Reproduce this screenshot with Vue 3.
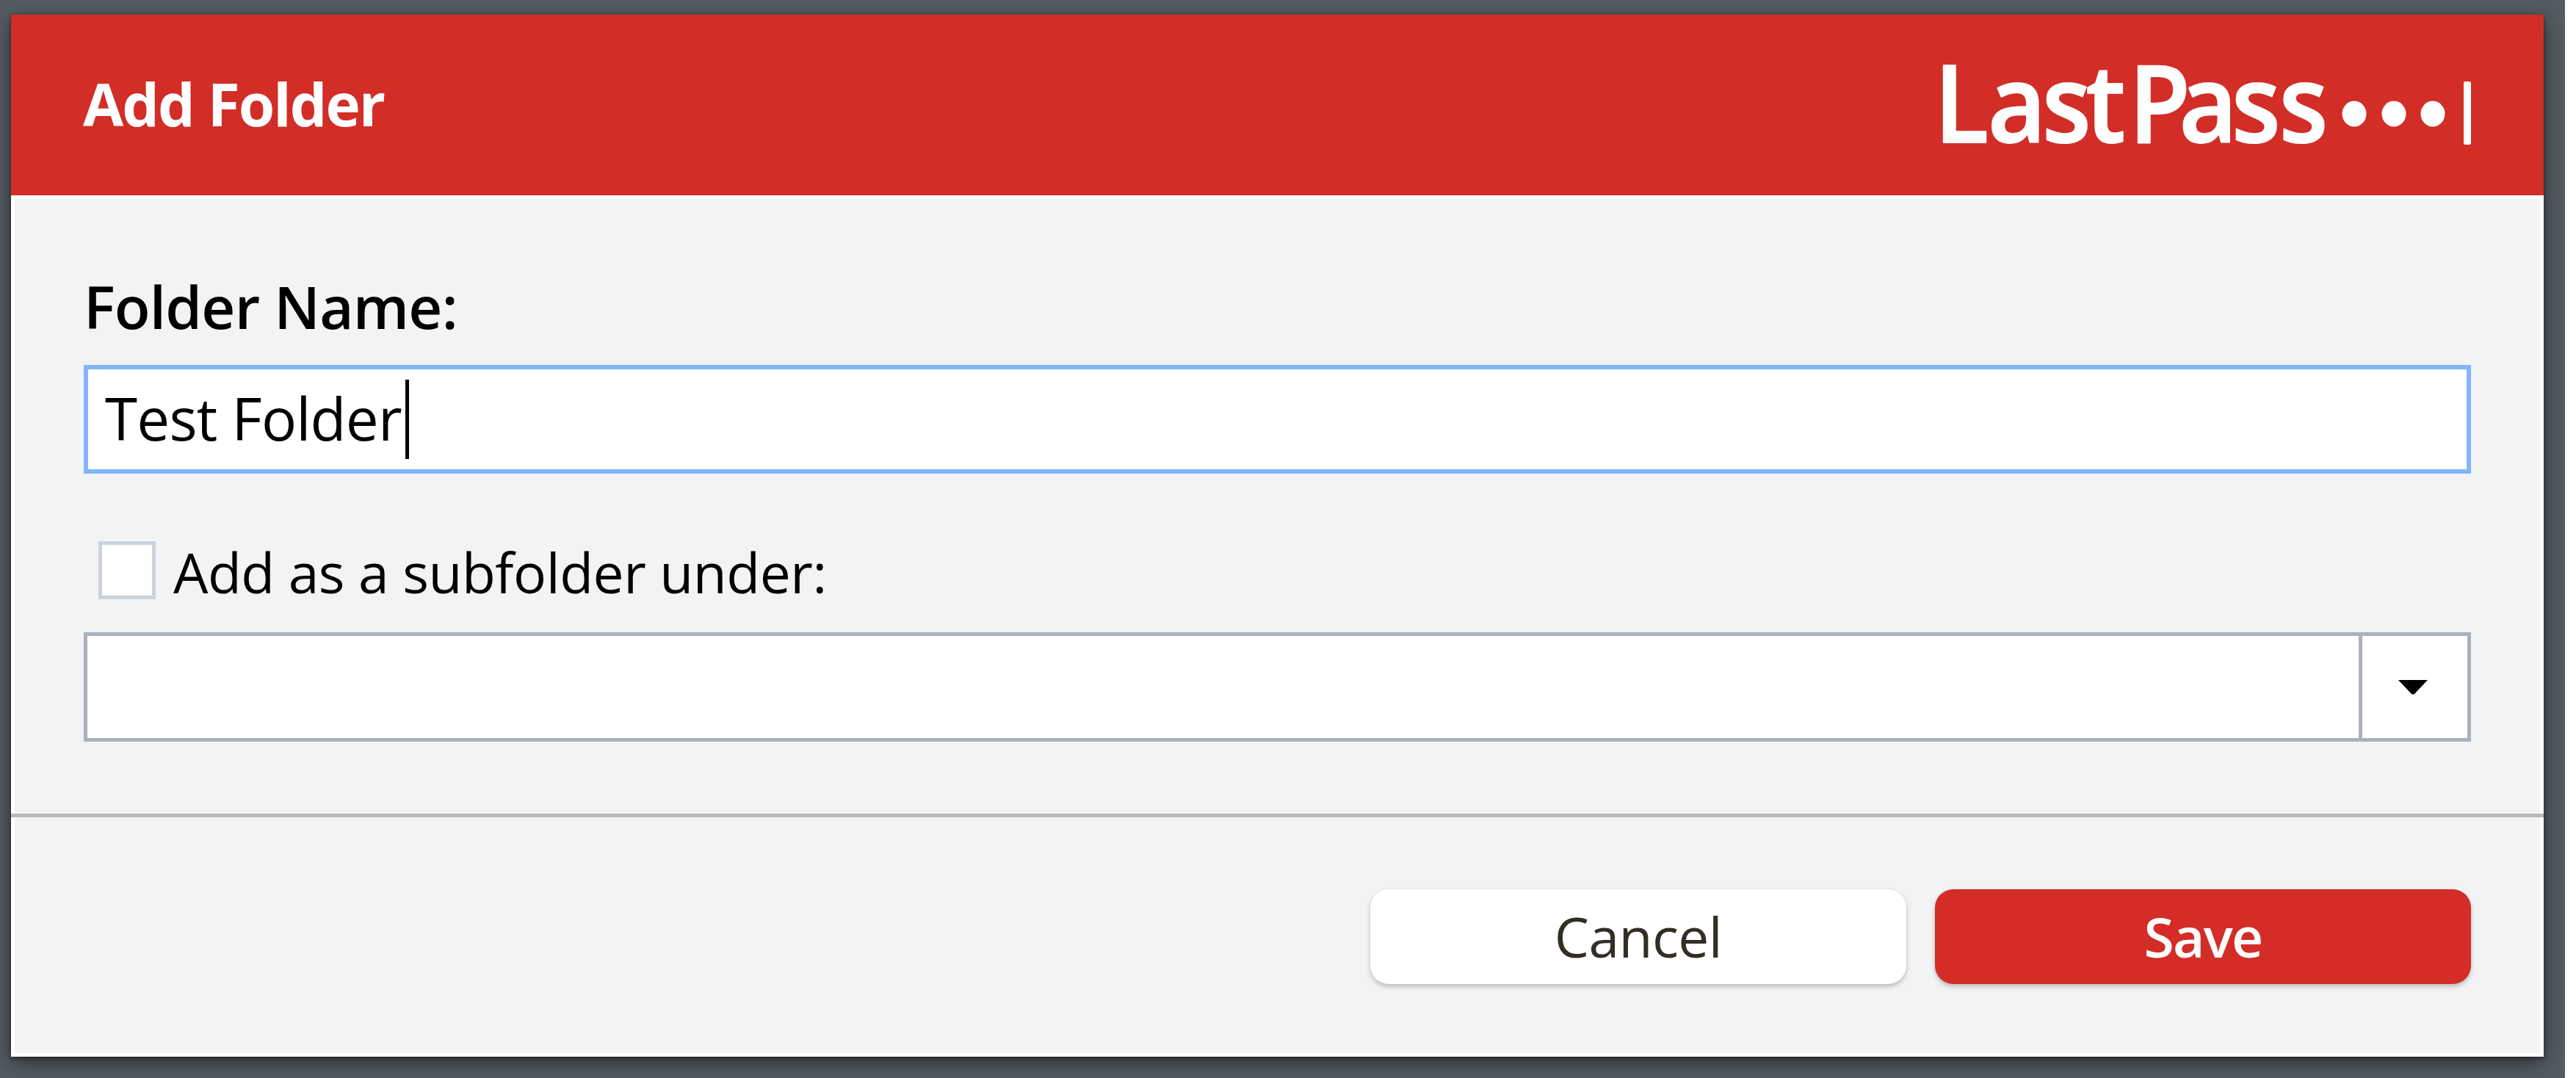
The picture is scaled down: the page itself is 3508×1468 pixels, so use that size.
<script setup>
import { ref } from 'vue'

const folderName = ref('Test Folder')
</script>

<template>
  <div class="page">
    <div class="backdrop">
      <section class="dialog">
        <header class="header">
          <h1 class="title"><span>Add Folder</span></h1>
          <svg class="logo" width="724" height="126" viewBox="0 0 724 126" aria-label="LastPass">
            <text y="114" x="-7.5 71 150.5 214.5 277.5 351 428 497.5" transform="scale(.93 1)">LastPass</text>
            <ellipse cx="565" cy="75" rx="16.5" ry="17.5" />
            <ellipse cx="619" cy="75" rx="16.5" ry="17.5" />
            <ellipse cx="672" cy="75" rx="16.5" ry="17.5" />
            <rect x="714" y="31" width="10" height="86" rx="2" />
          </svg>
        </header>
        <main class="body">
          <div class="label"><span>Folder Name:</span></div>
          <div class="field"><span class="value">{{ folderName }}</span><i class="caret"></i></div>
          <div class="option">
            <i class="checkbox"></i>
            <span class="option-text">Add as a subfolder under:</span>
          </div>
          <div class="select">
            <div class="select-value"></div>
            <div class="select-arrow">
              <svg width="40" height="20" viewBox="0 0 40 20"><path d="M0 0H40L22 19Q20 20 18 19Z" /></svg>
            </div>
          </div>
        </main>
        <footer class="footer">
          <button class="btn cancel"><span>Cancel</span></button>
          <button class="btn save"><span>Save</span></button>
        </footer>
      </section>
    </div>
  </div>
</template>

<style>
body {
  background: #fff;
  overflow: hidden;
}
</style>

<style scoped>
.page {
  width: 3508px;
  height: 1468px;
  font-family: "Open Sans", "Noto Sans", sans-serif;
  color: #000;
}
.backdrop {
  box-sizing: border-box;
  width: 3493px;
  height: 1468px;
  padding: 20px 29px 29px 15px;
  background: #545c63;
  overflow: hidden;
}
.dialog {
  display: flex;
  flex-direction: column;
  height: 1419px;
  background: #f2f3f5;
  box-shadow: 0 8px 26px rgba(0, 0, 0, 0.5), 0 2px 5px rgba(0, 0, 0, 0.45);
}
.header {
  display: flex;
  justify-content: space-between;
  box-sizing: border-box;
  height: 246px;
  padding: 60px 99px 0 98px;
  background: #d22d27;
}
.title {
  margin: 0;
  font-size: 80px;
  font-weight: 700;
  line-height: 122px;
  letter-spacing: -1.9px;
  color: #fff;
}
.logo {
  overflow: visible;
  fill: #fff;
}
.logo text {
  font-size: 147px;
  font-weight: 560;
  stroke: #fff;
  stroke-width: 2px;
  stroke-linejoin: round;
}
.body {
  box-sizing: border-box;
  height: 848px;
  border: solid #fff;
  border-width: 5px 5px 0;
  padding: 92px 94px 0;
}
.label {
  height: 134px;
  font-size: 80px;
  font-weight: 600;
  line-height: 108px;
  letter-spacing: -0.8px;
}
.field {
  display: flex;
  align-items: center;
  box-sizing: border-box;
  height: 148px;
  padding-left: 23px;
  border: 6px solid #82b5fb;
  background: #fff;
  font-size: 80px;
  letter-spacing: -0.8px;
}
.value {
  padding-bottom: 5px;
}
.caret {
  width: 5px;
  height: 108px;
  margin-left: 5px;
  background: #000;
}
.option {
  display: flex;
  align-items: center;
  box-sizing: border-box;
  height: 216px;
  padding: 51px 0 0 20px;
  font-size: 75px;
  letter-spacing: -0.5px;
}
.checkbox {
  box-sizing: border-box;
  width: 78px;
  height: 79px;
  margin-top: -5px;
  border: 5px solid #ccd2dc;
  background: #fff;
}
.option-text {
  margin-left: 24px;
}
.select {
  display: flex;
  box-sizing: border-box;
  height: 149px;
  border: 5px solid #a9b1be;
  background: #fff;
}
.select-value {
  flex: 1;
}
.select-arrow {
  display: flex;
  align-items: center;
  justify-content: center;
  box-sizing: border-box;
  width: 148px;
  padding-right: 5px;
  border-left: 5px solid #a9b1be;
}
.footer {
  display: flex;
  flex: 1;
  justify-content: flex-end;
  align-items: flex-start;
  gap: 39px;
  padding: 97px 94px 0;
  border: 5px solid #fff;
  border-top: 0;
  position: relative;
}
.footer::before {
  content: "";
  position: absolute;
  top: -6px;
  left: -5px;
  right: -5px;
  height: 5px;
  background: #b9b9b9;
}
.btn {
  width: 730px;
  height: 129px;
  padding: 0;
  border: 0;
  border-radius: 25px;
  font: 400 75px/129px "Open Sans", "Noto Sans", sans-serif;
  letter-spacing: -0.6px;
  box-shadow: 0 4px 6px rgba(0, 0, 0, 0.2), 0 0 4px rgba(0, 0, 0, 0.06);
}
.cancel {
  background: #fff;
  color: #332e25;
}
.save {
  background: #d42c27;
  color: #fff;
  font-weight: 600;
  letter-spacing: -1.8px;
}
</style>
